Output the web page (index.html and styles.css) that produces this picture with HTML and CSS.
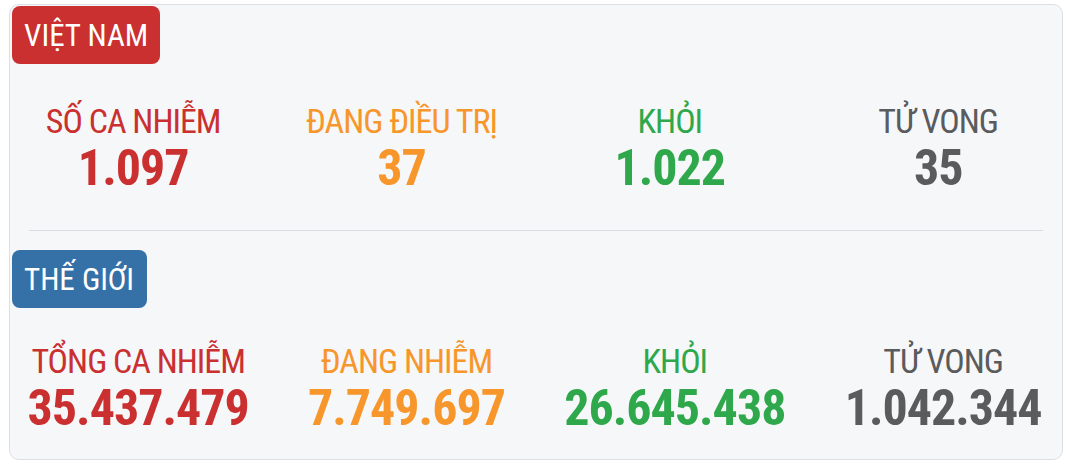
FILE: index.html
```html
<!DOCTYPE html>
<html lang="vi">
<head>
<meta charset="utf-8">
<link rel="stylesheet" href="styles.css">
</head>
<body>
<div class="card">
  <section class="region region-vn">
    <div class="badge badge-red">VIỆT NAM</div>
    <div class="stats stats-vn">
      <div class="stat"><div class="label c-red">SỐ CA NHIỄM</div><div class="num c-red">1.097</div></div>
      <div class="stat"><div class="label c-orange">ĐANG ĐIỀU TRỊ</div><div class="num c-orange">37</div></div>
      <div class="stat"><div class="label c-green">KHỎI</div><div class="num c-green">1.022</div></div>
      <div class="stat"><div class="label c-gray">TỬ VONG</div><div class="num c-gray">35</div></div>
    </div>
  </section>
  <hr class="divider">
  <section class="region region-world">
    <div class="badge badge-blue">THẾ GIỚI</div>
    <div class="stats stats-world">
      <div class="stat"><div class="label c-red">TỔNG CA NHIỄM</div><div class="num c-red">35.437.479</div></div>
      <div class="stat"><div class="label c-orange">ĐANG NHIỄM</div><div class="num c-orange">7.749.697</div></div>
      <div class="stat"><div class="label c-green">KHỎI</div><div class="num c-green">26.645.438</div></div>
      <div class="stat"><div class="label c-gray">TỬ VONG</div><div class="num c-gray">1.042.344</div></div>
    </div>
  </section>
</div>
</body>
</html>
```
FILE: styles.css
```css
html, body {
  margin: 0;
  padding: 0;
  background: #ffffff;
}
body {
  font-family: "Roboto Condensed", Roboto, "Liberation Sans", sans-serif;
}
.card {
  box-sizing: border-box;
  margin: 4px 0 0 9px;
  width: 1054px;
  height: 456px;
  border: 1px solid #dcdfe4;
  border-radius: 10px;
  background: #f6f7f9;
}
.region-vn {
  padding-top: 1px;
}
.region-world {
  padding-top: 19px;
}
.badge {
  box-sizing: border-box;
  display: inline-flex;
  align-items: center;
  height: 58px;
  margin-left: 2px;
  padding: 0 0 0 12px;
  border-radius: 8px;
  color: #ffffff;
  font-size: 31px;
  font-weight: 400;
  white-space: nowrap;
}
.badge-red {
  background: #c9302f;
  width: 148px;
}
.badge-blue {
  background: #3571a7;
  width: 135px;
}
.stats {
  display: grid;
  grid-template-columns: repeat(4, 268.33px);
  width: 1073px;
}
.stats-vn {
  margin: 39px 0 0 -11px;
}
.stats-world {
  margin: 35px 0 0 -6px;
}
.stat {
  display: flex;
  flex-direction: column;
  align-items: center;
  text-align: center;
}
.label {
  font-size: 34px;
  line-height: 36px;
  letter-spacing: -1px;
  font-weight: 400;
  white-space: nowrap;
}
.num {
  margin-top: 1px;
  font-size: 50px;
  line-height: 56px;
  letter-spacing: -1px;
  font-weight: 700;
  white-space: nowrap;
}
.divider {
  margin: 34px 19px 0 19px;
  border: 0;
  height: 1px;
  background: #dcdde2;
}
.c-red { color: #c9302f; }
.c-orange { color: #f7962b; }
.c-green { color: #2fa74b; }
.c-gray { color: #5a5b5d; }
```
